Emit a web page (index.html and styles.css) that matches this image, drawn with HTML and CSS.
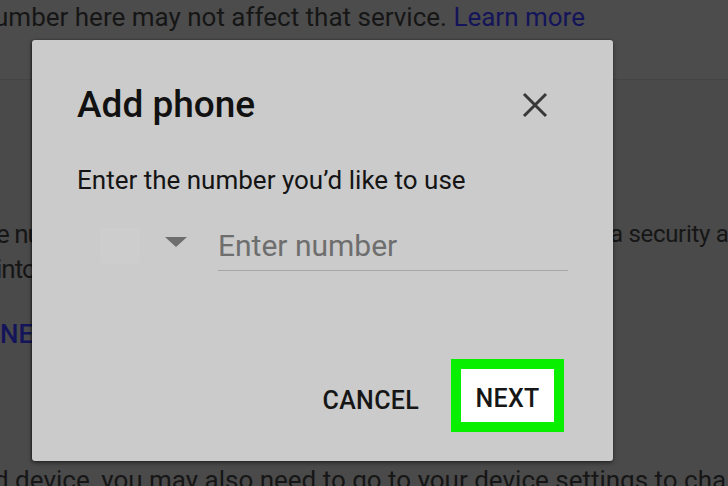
FILE: index.html
```html
<!DOCTYPE html>
<html lang="en">
<head>
  <meta charset="UTF-8" />
  <title>Add phone</title>
  <link rel="stylesheet" href="styles.css">
</head>
<body>

  <div class="page">
    <div class="notice">
      <p>umber here may not affect that service. <a href="#">Learn more</a></p>
    </div>

    <div class="security">
      <div class="row"><span class="near">e nu</span><span class="far">a security a</span></div>
      <div class="row"><span class="near">into</span></div>
      <div class="row link"><span>NE</span></div>
    </div>

    <p class="device">d device, you may also need to go to your device settings to cha</p>
  </div>

  <div class="dialog">
    <div class="dialog-head">
      <h2>Add phone</h2>
      <button class="close" aria-label="Close">
        <svg width="26" height="26" viewBox="0 0 26 26">
          <path d="M2 2 L24 24 M24 2 L2 24" stroke="#383838" stroke-width="3" fill="none" />
        </svg>
      </button>
    </div>

    <p class="prompt">Enter the number you’d like to use</p>

    <div class="phone-row">
      <div class="country">
        <div class="flag"></div>
        <div class="caret"></div>
      </div>
      <input type="tel" class="number" placeholder="Enter number">
    </div>

    <div class="actions">
      <button class="btn-text">CANCEL</button>
      <div class="highlight">
        <button class="btn-text next">NEXT</button>
      </div>
    </div>
  </div>

</body>
</html>
```

FILE: styles.css
```css
* { margin: 0; padding: 0; box-sizing: border-box; }

html, body {
  width: 728px; height: 486px;
  overflow: hidden;
  background: #4a4a4a;
  font-family: Roboto, 'Noto Sans', sans-serif;
  color: #161616;
}

.page { position: relative; height: 100%; overflow: hidden; }

.notice {
  height: 80px;
  border-bottom: 1px solid #444;
  background: #4c4c4c;
}

.notice p {
  font-size: 26px; line-height: 34px;
  white-space: nowrap;
  margin-left: -6px;
}

.notice a { color: #14145a; text-decoration: none; }

.security { padding-top: 137px; }

.row {
  display: flex; justify-content: space-between;
  font-size: 26px; line-height: 35px;
  white-space: nowrap;
}

.row .near { margin-left: -4px; letter-spacing: -1px; }

.row .far {
  margin-left: auto; width: 118px;
  overflow: hidden;
  font-size: 24px; letter-spacing: -0.3px;
}

.row.link {
  margin-top: 30px;
  color: #14145a; font-weight: 500;
}

.device {
  margin-top: 113px;
  font-size: 26px; line-height: 30px;
  white-space: nowrap;
  margin-left: -6px;
}

/* dialog on top of the page */
.dialog {
  position: absolute; left: 32px; top: 40px;
  width: 581px; height: 421px;
  background: #cbcbcb;
  border-radius: 3px;
  box-shadow: 0 2px 4px rgba(0,0,0,0.45), -1px 0 2px rgba(0,0,0,0.4);
  padding: 44px 45px 0 45px;
  display: flex; flex-direction: column;
}

.dialog-head {
  display: flex; align-items: center; justify-content: space-between;
  height: 42px;
}

.dialog-head h2 {
  font-size: 37px; font-weight: 500; line-height: 42px;
  color: #111;
}

.close {
  background: none; border: none;
  width: 26px; height: 26px;
  margin-right: 20px;
  display: flex;
}

.prompt {
  margin-top: 38px;
  font-size: 26px; line-height: 32px;
  color: #141414;
}

.phone-row {
  display: flex; align-items: flex-end;
  margin-top: 25px;
}

.country {
  display: flex; align-items: center;
  width: 142px; height: 50px;
  padding-left: 23px;
}

.flag {
  width: 40px; height: 36px;
  background: #cdcdcd;
  border-radius: 3px;
}

.caret {
  margin-left: 25px;
  width: 0; height: 0;
  border-left: 11px solid transparent;
  border-right: 11px solid transparent;
  border-top: 10px solid #6e6e6e;
  margin-bottom: 8px;
}

.number {
  width: 350px; height: 50px;
  background: none; border: none;
  border-bottom: 1px solid #a6a6a6;
  font-family: inherit; font-size: 30px;
  outline: none;
}

.number::placeholder { color: #6e6e6e; }

.actions {
  display: flex; align-items: center; justify-content: flex-end;
  margin-top: auto; margin-bottom: 29px;
  margin-right: 4px;
}

.btn-text {
  background: none; border: none;
  font-family: inherit; font-size: 25px; font-weight: 500;
  color: #161616;
  letter-spacing: 0.3px;
}

.highlight {
  margin-left: 32px;
  border: 10px solid #08f000;
  background: #fff;
  width: 113px; height: 73px;
  display: flex; align-items: center; justify-content: center;
}

.actions > .btn-text { padding-top: 10px; }
.next { padding-top: 6px; }
```
